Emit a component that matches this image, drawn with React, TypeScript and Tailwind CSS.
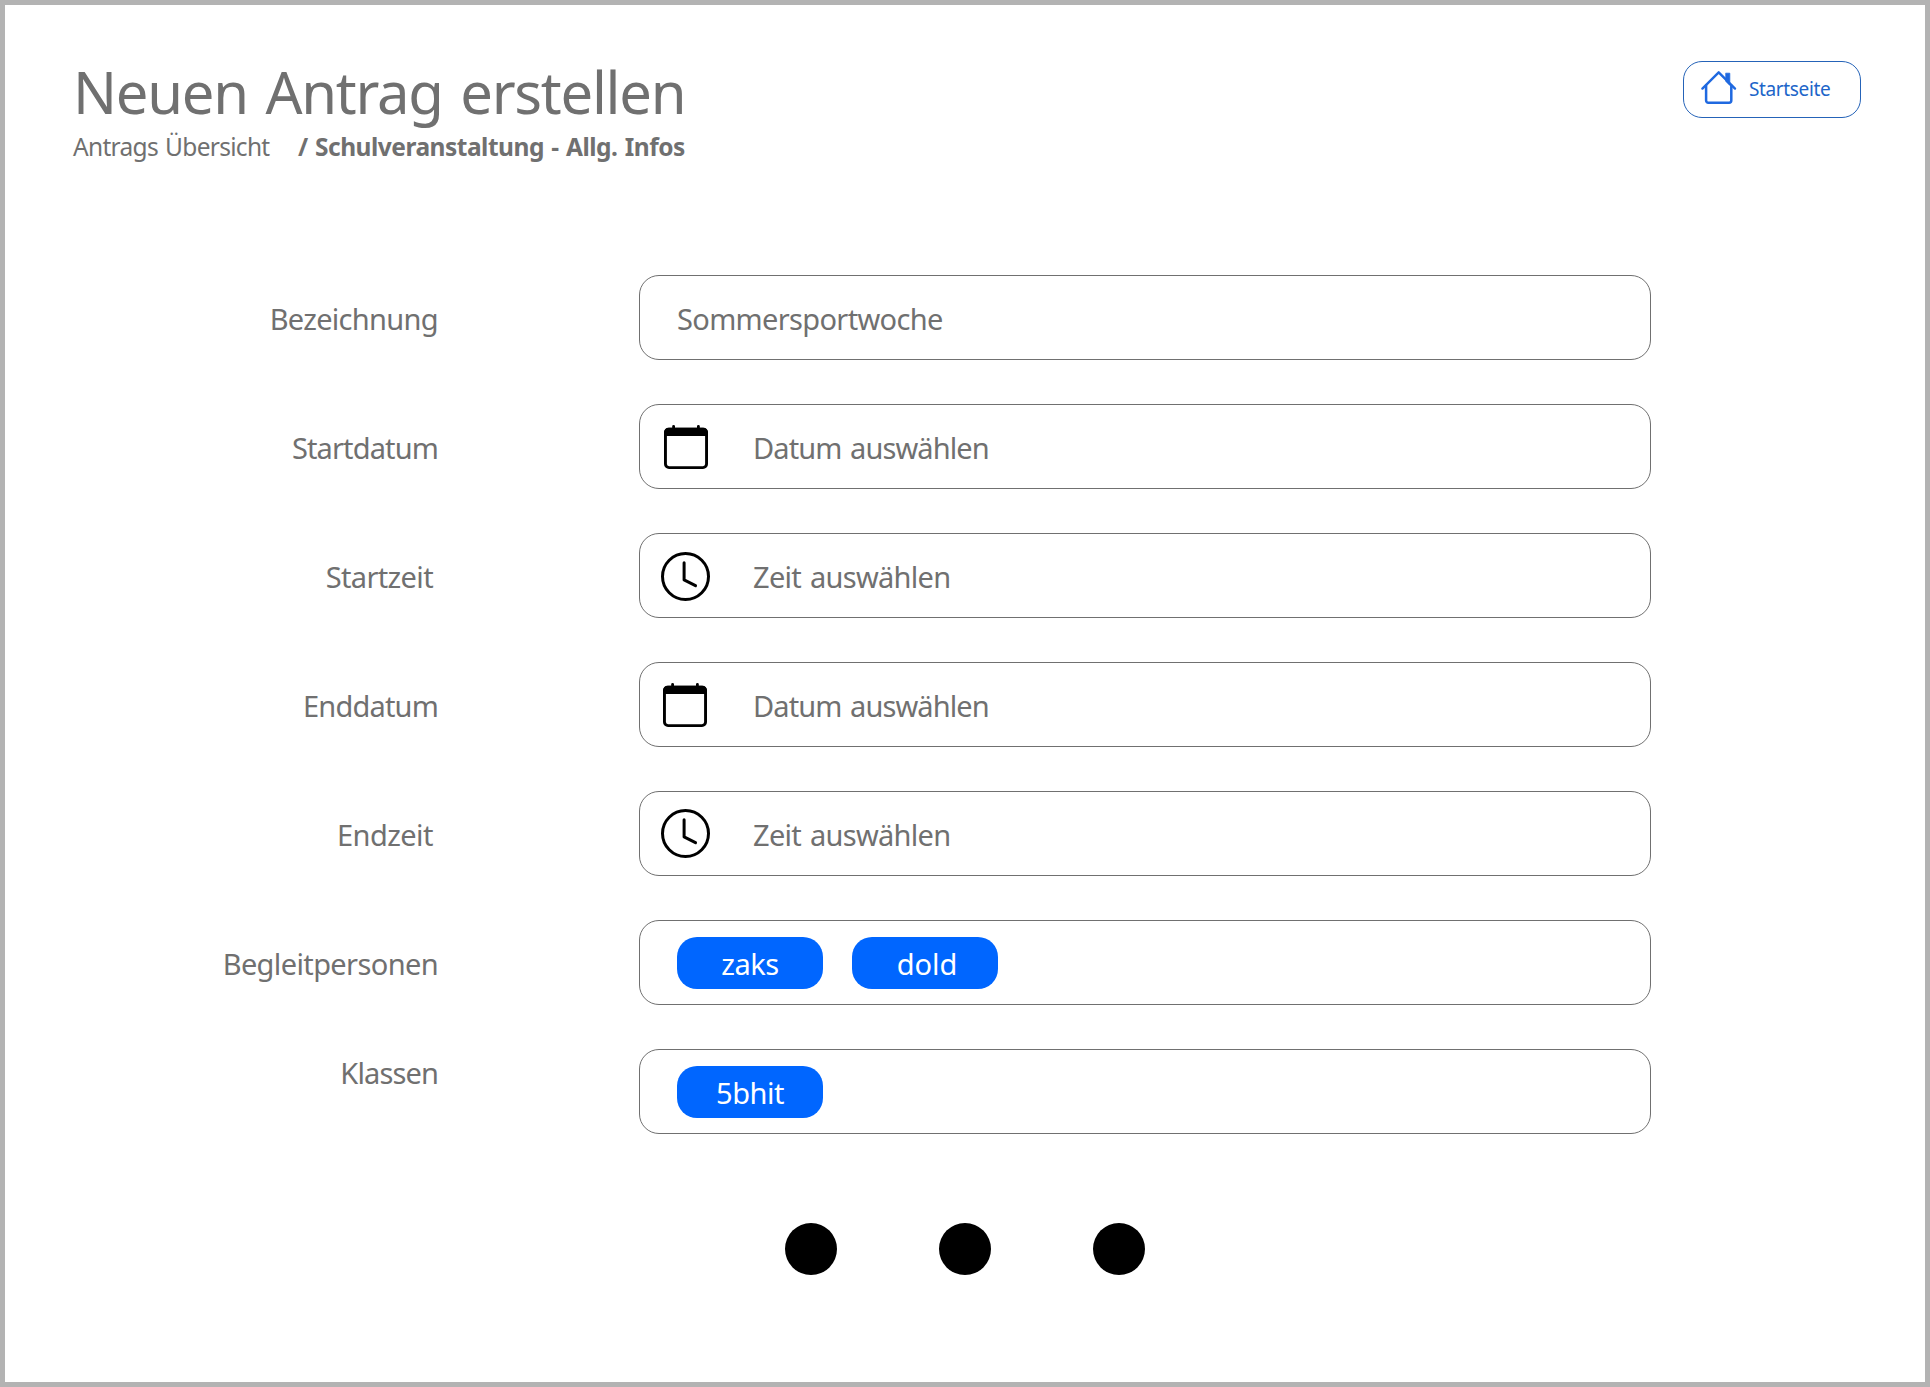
import type { ReactNode } from 'react';

function HomeIcon() {
  return (
    <svg className="h-[36px] w-[37px] shrink-0" viewBox="0 0 37 36" fill="none" stroke="#1f69e0" strokeLinecap="round" strokeLinejoin="round">
      <path d="M26 3.2h3.8v12.2L26 11.6z" fill="#1f69e0" stroke="#1f69e0" strokeWidth="0.8" />
      <path d="M2.4 18.6 18.7 2.3 35 18.6" strokeWidth="2.4" />
      <path d="M6.1 15.4v15.2a2.2 2.2 0 0 0 2.2 2.2h20.8a2.2 2.2 0 0 0 2.2-2.2V15.4" strokeWidth="2.5" />
    </svg>
  );
}

function CalendarIcon({ x = 3 }: { x?: number }) {
  return (
    <svg className="h-[51px] w-[50px] shrink-0" viewBox="0 0 50 51">
      <g transform={`translate(${x} 0)`}>
        <rect x="1.45" y="8.2" width="41.1" height="38.4" rx="3.6" fill="none" stroke="#000" strokeWidth="2.9" />
        <path d="M0 15V11.2a4.5 4.5 0 0 1 4.5-4.5h35A4.5 4.5 0 0 1 44 11.2V15z" />
        <path d="M9.6 8V5.3M34.4 8V5.3" stroke="#000" strokeWidth="2.8" strokeLinecap="round" />
      </g>
    </svg>
  );
}

function ClockIcon({ y = 26.5 }: { y?: number }) {
  return (
    <svg className="h-[51px] w-[50px] shrink-0" viewBox="0 0 50 51" fill="none" stroke="#000" strokeWidth="3" strokeLinecap="round" strokeLinejoin="round">
      <g transform={`translate(24.5 ${y})`}>
        <circle r="23" />
        <path d="M-1.4 -13.8V3.4L10 9.2" />
      </g>
    </svg>
  );
}

function Row({ label, labelClass, children }: { label: string; labelClass: string; children: ReactNode }) {
  return (
    <div className="flex h-[85px] gap-[201px]">
      <div className={`flex w-[433px] items-center justify-end whitespace-nowrap ${labelClass}`}>{label}</div>
      <div className="flex w-[1012px] items-center rounded-[20px] border border-[#707070]">{children}</div>
    </div>
  );
}

function Picker({ icon, children, className }: { icon: ReactNode; children: ReactNode; className: string }) {
  return (
    <div className="flex items-center gap-[42px] pl-[21px]">
      {icon}
      <span className={`pt-[3px] whitespace-nowrap [word-spacing:2px] ${className}`}>{children}</span>
    </div>
  );
}

function Chip({ children, className }: { children: ReactNode; className: string }) {
  return (
    <span className={`flex h-[52px] w-[146px] items-center justify-center rounded-[20px] bg-[#0066ff] pt-[2px] text-white ${className}`}>
      {children}
    </span>
  );
}

export default function App() {
  return (
    <main className="h-[1387px] w-[1930px] overflow-hidden border-5 border-[#b3b3b3] bg-white pt-[56px] font-['Noto_Sans',sans-serif] text-[29px] leading-[40px] text-[#707070]">
      <header className="flex h-[101px] items-start justify-between pr-[64px] pl-[68px]">
        <div>
          <h1 className="text-[58px] leading-[61px] tracking-[-1.3px] whitespace-nowrap [word-spacing:4px]">Neuen Antrag erstellen</h1>
          <nav className="mt-[9px] flex text-[24.5px] leading-[31px] whitespace-nowrap">
            <span className="w-[225px] tracking-[-0.7px] [word-spacing:1.5px]">Antrags Übersicht</span>
            <span className="font-bold tracking-[-0.5px] [word-spacing:1.5px]">/ Schulveranstaltung - Allg. Infos</span>
          </nav>
        </div>
        <button className="flex h-[57px] w-[178px] items-center rounded-[19px] border border-[#2563b8] pl-[16px] text-[19px] leading-[26px] text-[#2065c9]">
          <span className="pb-[3px]"><HomeIcon /></span>
          <span className="pb-[2px] pl-[12px] tracking-[-0.36px]">Startseite</span>
        </button>
      </header>

      <form className="mt-[113px] flex flex-col gap-[44px]">
        <Row label="Bezeichnung" labelClass="pt-[3px] tracking-[-0.68px]">
          <span className="pt-[3px] pl-[37px] tracking-[-0.66px]">Sommersportwoche</span>
        </Row>
        <Row label="Startdatum" labelClass="pt-[3px] tracking-[-0.86px]">
          <Picker icon={<CalendarIcon />} className="tracking-[-0.9px]">Datum auswählen</Picker>
        </Row>
        <Row label="Startzeit" labelClass="pt-[3px] pr-[5px] tracking-[-0.64px]">
          <Picker icon={<ClockIcon />} className="tracking-[-0.7px]">Zeit auswählen</Picker>
        </Row>
        <Row label="Enddatum" labelClass="pt-[3px] tracking-[-0.82px]">
          <Picker icon={<CalendarIcon x={2} />} className="tracking-[-0.9px]">Datum auswählen</Picker>
        </Row>
        <Row label="Endzeit" labelClass="pt-[3px] pr-[5px] tracking-[-0.54px]">
          <Picker icon={<ClockIcon y={25.5} />} className="tracking-[-0.7px]">Zeit auswählen</Picker>
        </Row>
        <Row label="Begleitpersonen" labelClass="pt-[3px] tracking-[-0.62px]">
          <div className="flex gap-[29px] pl-[37px]">
            <Chip className="tracking-[-0.49px]">zaks</Chip>
            <Chip className="pl-[4px]">dold</Chip>
          </div>
        </Row>
        <Row label="Klassen" labelClass="pb-[37px] tracking-[-0.87px]">
          <div className="pl-[37px]">
            <Chip className="tracking-[-0.49px]">5bhit</Chip>
          </div>
        </Row>
      </form>

      <div className="mt-[89px] flex gap-[102px] pl-[780px]">
        <span className="size-[52px] rounded-full bg-black" />
        <span className="size-[52px] rounded-full bg-black" />
        <span className="size-[52px] rounded-full bg-black" />
      </div>
    </main>
  );
}
